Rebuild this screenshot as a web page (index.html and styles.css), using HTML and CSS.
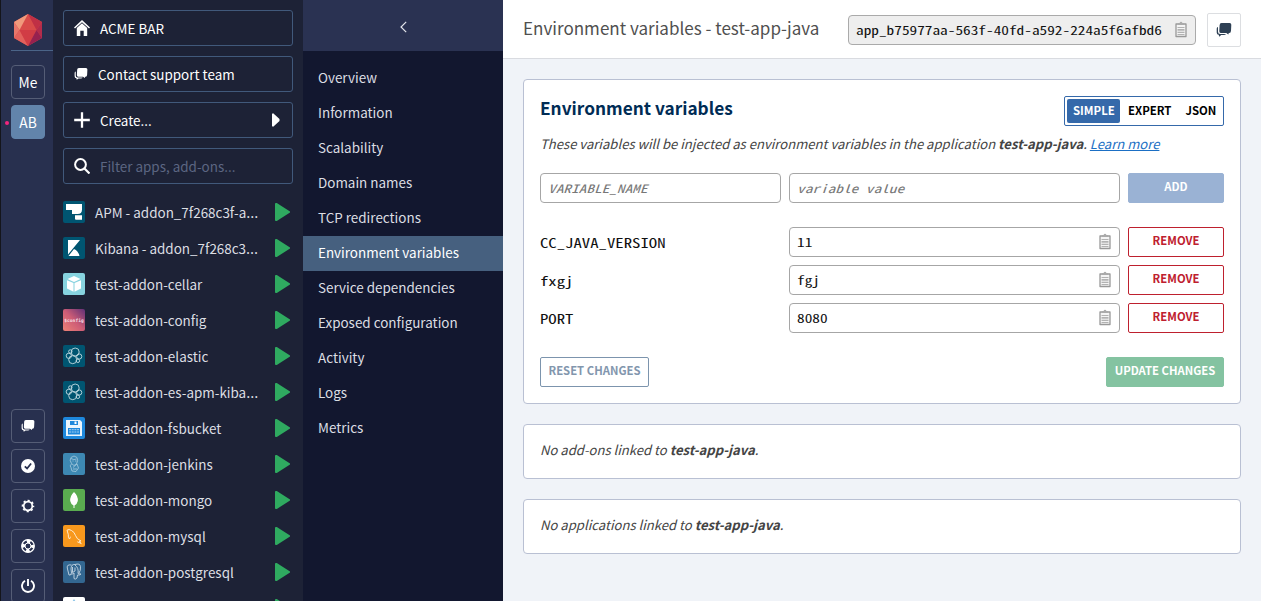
FILE: index.html
```
<!DOCTYPE html>
<html lang="en">
<head>
<meta charset="utf-8">
<title>Environment variables - test-app-java</title>
<link rel="stylesheet" href="styles.css">
</head>
<body>
<svg class="defs" width="0" height="0">
  <symbol id="chat" viewBox="0 0 16 16"><path d="M5.500 1h8.200q1.600 0 1.600 1.800l-.3 6q-.1 2.200-1.700 2.200h-.5l-.5 1.600-2-1.600H4.700Q3.200 11 3.300 9.200l.3-6Q3.700 1 5.500 1z"/><path d="M2 5q-1.300.3-1.300 1.800v3.700q0 2.200 2 2.300l.5 1.900 2-1.700h2.600q1.700 0 2.200-1H4.200Q2 12 2 9.800z"/></symbol>
  <symbol id="clip" viewBox="0 0 12 17"><path d="M1 3h10v12.500H1z" fill="#f4f4f4" stroke="#999" stroke-width="1.300" stroke-linejoin="round"/><path d="M3 2h1.500Q6-.6 7.500 2H9v2H3z" fill="#aaa"/><path d="M2.500 6.500h7M2.500 8.500h7M2.500 9.800h7M2.500 11.500h7M2.500 13.500h7" stroke="#aaa" stroke-width=".9"/></symbol>
  <symbol id="play" viewBox="0 0 15 18"><path d="M.8 0h1L15 8.500v1L1.800 18h-1Q0 18 0 17V1Q0 0 .8 0z" fill="#2faa60"/></symbol>
  <symbol id="elastic" viewBox="0 0 22 22"><path fill="#005571" d="M0 0h22v22H0z"/><g fill="none" stroke="#c4dbe2" stroke-width=".9"><circle cx="12.200" cy="7" r="4"/><circle cx="9.700" cy="14.700" r="4"/><circle cx="5.800" cy="10.800" r="2.600"/><circle cx="16.200" cy="11.500" r="2.600"/><circle cx="7.300" cy="6.500" r="1.700"/><circle cx="14.900" cy="15.800" r="1.700"/></g></symbol>
</svg>
<div class="app">
  <aside class="rail">
    <div class="brand"><svg width="28" height="32" viewBox="0 0 28 32"><path fill="#d94b49" d="M14 0 28 8v16l-14 8L0 24V8z"/><path fill="#f09a7c" d="M14 0 0 8l5.500 8z"/><path fill="#e8766a" d="M0 8v16l5.500-8z"/><path fill="#e2615c" d="m0 24 14 8-8.500-16z"/><path fill="#d13c45" d="M5.500 16h17L14 32z"/><path fill="#c03045" d="m14 0 14 8-5.500 8z"/><path fill="#b32c4b" d="M28 8v16l-5.500-8z"/><path fill="#96214f" d="m28 24-14 8 8.500-16z"/></svg></div>
    <div class="orgs"><a class="tile">Me</a><a class="tile on">AB</a></div>
    <div class="tools">
      <a class="tile"><svg width="14" height="14"><use href="#chat"/></svg></a>
      <a class="tile"><svg width="14" height="14" viewBox="0 0 14 14"><circle cx="7" cy="7" r="7"/><path d="m3.800 7.300 2.300 2.200 4-5" fill="none" stroke="#28304f" stroke-width="1.800"/></svg></a>
      <a class="tile"><svg width="14" height="14" viewBox="0 0 14 14"><g fill="none" stroke="#fff"><circle cx="7" cy="7" r="4.300" stroke-width="1.700"/><circle cx="7" cy="7" r="5.500" stroke-width="1.600" stroke-dasharray="2.160 2.160" stroke-dashoffset="1.080"/></g></svg></a>
      <a class="tile"><svg width="14" height="14" viewBox="0 0 14 14"><g fill="none" stroke="#fff"><circle cx="7" cy="7" r="6.300" stroke-width="1.200"/><circle cx="7" cy="7" r="3" stroke-width="1"/><circle cx="7" cy="7" r="4.700" stroke-width="3.400" stroke-dasharray="3.690 3.690" stroke-dashoffset="1.845"/></g></svg></a>
      <a class="tile"><svg width="14" height="14" viewBox="0 0 14 14"><path d="M4 1.800a6 6 0 1 0 6 0M7 0v7" fill="none" stroke="#fff" stroke-width="1.900"/></svg></a>
    </div>
  </aside>

  <aside class="side">
    <div class="box"><svg class="bi" width="16" height="16" viewBox="0 0 16 16"><path d="M8 0 16 7.500l-1 1-7-6.300-7 6.300-1-1z"/><path d="m8 3.200 5.200 4.700V16H9.700v-5.200H6.300V16H2.800V7.900z"/></svg>ACME BAR</div>
    <div class="box wide"><svg class="bi" width="14" height="14"><use href="#chat"/></svg>Contact support team</div>
    <div class="box"><svg class="bi" width="16" height="16" viewBox="0 0 16 16"><path d="M8 .2v15.600M.2 8h15.600" stroke="#fff" stroke-width="2.300"/></svg>Create...<svg class="caret" width="8" height="14" viewBox="0 0 8 14"><path d="M0 1q1-1.500 2 0l5.500 5v2L2 13q-1 1.500-2 0z"/></svg></div>
    <div class="box dim"><svg class="bi" width="16" height="16" viewBox="0 0 16 16" fill="none" stroke="#fff"><circle cx="6.500" cy="6.500" r="5.400" stroke-width="2"/><path d="m10.500 10.500 5 5" stroke-width="2.200"/></svg>Filter apps, add-ons...</div>
    <div class="list">
      <div class="row"><svg class="logo" viewBox="0 0 22 22"><path fill="#005571" d="M0 0h22v22H0z"/><path fill="#fff" d="M3 3h16v5.500q0 4.500-4.500 4.500H9V9H3zM12 14.300h7v4.500h-6q-1 0-1-1z"/></svg><span>APM - addon_7f268c3f-a<i class="dots">…</i></span><svg class="play"><use href="#play"/></svg></div>
      <div class="row"><svg class="logo" viewBox="0 0 22 22"><path fill="#005571" d="M0 0h22v22H0z"/><path fill="#fff" d="M5 3h12L5 17.500zM11 12q4 1.500 5.500 7H5.500z"/></svg><span>Kibana - addon_7f268c3<i class="dots">…</i></span><svg class="play"><use href="#play"/></svg></div>
      <div class="row"><svg class="logo" viewBox="0 0 22 22"><path fill="#87d3df" d="M0 0h22v22H0z"/><path fill="#fff" d="m11 3 6.500 3L11 9 4.500 6zM4 7.200l6.500 2.900v8.700L4 15.500zM18 7.200v8.300l-6.500 3.300v-8.700z"/></svg><span>test-addon-cellar</span><svg class="play"><use href="#play"/></svg></div>
      <div class="row"><svg class="logo" viewBox="0 0 22 22"><defs><linearGradient id="g" x1="0" y1="1" x2="1" y2="0"><stop stop-color="#ee8276"/><stop offset=".5" stop-color="#cc5c76"/><stop offset="1" stop-color="#603077"/></linearGradient></defs><path fill="url(#g)" d="M0 0h22v22H0z"/><text class="cfg" x="11" y="12.500" text-anchor="middle">$config</text></svg><span>test-addon-config</span><svg class="play"><use href="#play"/></svg></div>
      <div class="row"><svg class="logo"><use href="#elastic"/></svg><span>test-addon-elastic</span><svg class="play"><use href="#play"/></svg></div>
      <div class="row"><svg class="logo"><use href="#elastic"/></svg><span>test-addon-es-apm-kiba<i class="dots">…</i></span><svg class="play"><use href="#play"/></svg></div>
      <div class="row"><svg class="logo" viewBox="0 0 22 22"><path fill="#1e88dc" d="M0 0h22v22H0z"/><path fill="#eaf5fd" fill-rule="evenodd" d="M3 3h14l2 2v14H3zM7 4v4h8V4zM5 11v6.500h12V11z"/><path fill="#fff" d="M11.500 4.500h2V7h-2z"/><path d="M6 12.700h10M6 15h10" stroke="#a9d2f2" stroke-dasharray="2 .7"/></svg><span>test-addon-fsbucket</span><svg class="play"><use href="#play"/></svg></div>
      <div class="row"><svg class="logo" viewBox="0 0 22 22"><path fill="#3d88b3" d="M0 0h22v22H0z"/><path fill="none" stroke="#a6cade" stroke-width=".8" d="M8.500 10.500Q6 7 8 4.500q3-3 6 0 1.500 3-.5 6.500l-2.500 1.500zM8 5.500q3 2 5.500.5M9.500 8h1M12 8h1.500M8.500 11q-2.500 2-.5 3.500l1 3.500 4 .5 2.500-3.500-1.500-4-4 3.500M10 16h4"/></svg><span>test-addon-jenkins</span><svg class="play"><use href="#play"/></svg></div>
      <div class="row"><svg class="logo" viewBox="0 0 22 22"><path fill="#5aac50" d="M0 0h22v22H0z"/><path fill="#fff" d="M11 3q4.300 4 3.800 9-.6 3-3.300 4.500V19h-1v-2.500Q7.800 15 7.200 12 6.800 7 11 3z"/></svg><span>test-addon-mongo</span><svg class="play"><use href="#play"/></svg></div>
      <div class="row"><svg class="logo" viewBox="0 0 22 22"><path fill="#f8981d" d="M0 0h22v22H0z"/><path fill="none" stroke="#fff3df" stroke-width=".9" d="M6.500 14Q5 13 5.300 9.500L4 5.200Q6 3.700 8.500 5.500q3 1.500 4 5 1 3.500 5.500 5.500l-2 .3 2.300 2.200-4-1.700M6.500 14l1-2.300"/></svg><span>test-addon-mysql</span><svg class="play"><use href="#play"/></svg></div>
      <div class="row"><svg class="logo" viewBox="0 0 22 22"><path fill="#336791" d="M0 0h22v22H0z"/><path fill="none" stroke="#c7d7e3" stroke-width=".9" d="M8.500 4Q3 3 4.500 8l1.500 6q1.500 1 2.500-2L8 8q0-5 4-4.500 5-1.500 5.500 2 .5 4-2 7.500h2.500q-1.500 1.500-3.500 1L14 17q-2 2-3 .5V12l-2.500 1.500M12 4q4 3 3 8.500M9.500 6v5.500L12 10V6.500"/></svg><span>test-addon-postgresql</span><svg class="play"><use href="#play"/></svg></div>
      <div class="row"><svg class="logo" viewBox="0 0 22 22"><path fill="#fff" d="M0 0h22v22H0z"/><path fill="#8ec6e8" d="m11 2 4 6H7z"/></svg><span></span><svg class="play"><use href="#play"/></svg></div>
    </div>
  </aside>

  <nav class="nav">
    <div class="collapse"><svg width="7" height="12" viewBox="0 0 7 12"><path d="M6.200.8 1 6l5.200 5.200" fill="none" stroke="#e4e6ec" stroke-width="1.200"/></svg></div>
    <div class="links"><a>Overview</a><a>Information</a><a>Scalability</a><a>Domain names</a><a>TCP redirections</a><a class="on">Environment variables</a><a>Service dependencies</a><a>Exposed configuration</a><a>Activity</a><a>Logs</a><a>Metrics</a></div>
  </nav>

  <main class="main">
    <header class="head">
      <h1>Environment variables - test-app-java</h1>
      <div class="field appid"><span>app_b75977aa-563f-40fd-a592-224a5f6afbd6</span><svg class="clip"><use href="#clip"/></svg></div>
      <div class="chatbtn"><svg width="16" height="16"><use href="#chat"/></svg></div>
    </header>
    <div class="content">
      <section class="card vars">
        <div class="top"><h2>Environment variables</h2><div class="toggle"><b class="on">SIMPLE</b><b>EXPERT</b><b>JSON</b></div></div>
        <p class="desc">These variables will be injected as environment variables in the application <strong>test-app-java</strong>. <a>Learn more</a></p>
        <div class="grid add"><div class="field ph"><span>VARIABLE_NAME</span></div><div class="field ph"><span>variable value</span></div><div class="btn blue">ADD</div></div>
        <div class="grid"><span class="key">CC_JAVA_VERSION</span><div class="field"><span>11</span><svg class="clip"><use href="#clip"/></svg></div><div class="btn red">REMOVE</div></div>
        <div class="grid"><span class="key">fxgj</span><div class="field"><span>fgj</span><svg class="clip"><use href="#clip"/></svg></div><div class="btn red">REMOVE</div></div>
        <div class="grid"><span class="key">PORT</span><div class="field"><span>8080</span><svg class="clip"><use href="#clip"/></svg></div><div class="btn red">REMOVE</div></div>
        <div class="actions"><div class="btn reset">RESET CHANGES</div><div class="btn green">UPDATE CHANGES</div></div>
      </section>
      <section class="card note">No add-ons linked to <strong>test-app-java</strong>.</section>
      <section class="card note">No applications linked to <strong>test-app-java</strong>.</section>
    </div>
  </main>
</div>
</body>
</html>
```
FILE: styles.css
```
* { box-sizing: border-box; }
body { margin: 0; height: 601px; overflow: hidden; font-family: "Noto Sans CJK SC", "Open Sans", sans-serif; font-size: 13.45px; line-height: 20px; }
svg { display: block; flex: none; }
.defs { position: absolute; }
.app { display: flex; height: 601px; overflow: hidden; }

.rail { width: 53px; flex: none; background: #28304f; border-left: 1px solid #14151b; padding-left: 10px; display: flex; flex-direction: column; fill: #fff; color: #fff; }
.brand { height: 51px; flex: none; padding: 14px 0 0 3px; border-bottom: 1px solid #4b6488; }
.orgs { display: flex; flex-direction: column; gap: 6px; padding-top: 14px; }
.tools { display: flex; flex-direction: column; gap: 6px; margin-top: 270px; }
.tile { position: relative; width: 34px; height: 34px; flex: none; border: 1px solid #555d76; border-radius: 4px; display: flex; align-items: center; justify-content: center; font-size: 13.8px; }
.tile.on { background: #6284ab; border-color: #6284ab; }
.tile.on::before { content: ""; position: absolute; left: -7px; top: 15px; width: 4px; height: 4px; border-radius: 2px; background: #f4267e; }

.side { width: 250px; flex: none; background: #1d2236; padding: 10px; display: flex; flex-direction: column; gap: 10px; fill: #fff; color: #fff; }
.box { height: 36px; flex: none; border: 1px solid #41597b; border-radius: 3px; display: flex; align-items: center; padding: 0 12px 0 10px; }
.bi { margin-right: 10px; }
.dim { color: #5c6682; }
.caret { margin-left: auto; }
.list { display: flex; flex-direction: column; }
.row { height: 36px; flex: none; display: flex; align-items: center; color: #dcdee3; }
.row span { width: 168px; margin: 0 12px 0 10px; white-space: nowrap; }
.dots { font: 15.500px/16px "Open Sans", sans-serif; }
.logo { width: 22px; height: 22px; border-radius: 2px; }
.play { width: 15px; height: 18px; }
.cfg { font: bold 4.600px "DejaVu Sans Mono", monospace; fill: #f6dfe4; }

.nav { width: 200px; flex: none; background: #12172f; color: #dcdee3; }
.collapse { height: 51px; background: #2a3252; display: flex; align-items: center; justify-content: center; padding-top: 2px; }
.links { display: flex; flex-direction: column; padding-top: 10px; }
.links a { height: 35px; padding: 6px 15px; }
.links .on { background: #46607f; color: #fff; }

.main { flex: 1; background: #f0f3f8; }
.head { height: 59px; background: #fff; border-bottom: 1px solid #d9dbe0; padding: 2px 20px 0; display: flex; align-items: center; }
h1 { margin: 0 0 5px; font-size: 17.05px; line-height: 26px; font-weight: 400; color: #505050; width: 325px; white-space: nowrap; }
.field { height: 30px; border: 1px solid #a6a6a6; border-radius: 4px; background: #fff; padding: 0 7px 1px; display: flex; align-items: center; justify-content: space-between; font-family: "Noto Sans Mono CJK SC", "DejaVu Sans Mono", monospace; font-size: 11.5px; color: #111; white-space: nowrap; }
.field span { transform: scaleX(1.33); transform-origin: left; }
.clip { width: 14px; height: 17px; }
.appid { width: 348px; background: #eee; border-color: #aaa; }
.chatbtn { width: 34px; height: 34px; margin-left: 11px; border: 1px solid #dcdee1; border-radius: 2px; display: flex; align-items: center; justify-content: center; fill: #2e4054; }

.content { padding: 20px; display: flex; flex-direction: column; gap: 20px; }
.card { background: #fff; border: 1px solid #b9c0d3; border-radius: 4px; padding: 0 16px; }
.vars { height: 325px; padding-top: 16px; display: flex; flex-direction: column; }
.top { display: flex; justify-content: space-between; height: 30px; }
h2 { margin: 0; font-size: 17.25px; line-height: 24px; color: #002c55; }
.toggle { width: 160px; height: 30px; border: 1px solid #3569aa; border-radius: 2px; padding: 2px; display: flex; font-size: 11.4px; line-height: 23px; color: #000; }
.toggle b { padding: 0 6px; margin-right: 2px; }
.toggle .on { background: #3569aa; color: #fff; border-radius: 2px; width: 53px; }
.desc, .note { font-style: italic; color: #444; font-size: 13.1px; }
.desc { margin: 8px 0 19px; white-space: nowrap; }
.desc a { color: #1b6fc4; text-decoration: underline; }
.grid { display: grid; grid-template-columns: 241px 331px 96px; gap: 8px; margin-bottom: 8px; }
.add { margin-bottom: 24px; }
.ph { color: #777; font-style: italic; }
.key { font-family: "Noto Sans Mono CJK SC", "DejaVu Sans Mono", monospace; font-size: 12.6px; height: 30px; line-height: 32px; color: #111; justify-self: start; transform: scaleX(1.33); transform-origin: left; }
.btn { height: 30px; border: 1px solid; border-radius: 2px; text-align: center; font-weight: 700; font-size: 11.3px; line-height: 25px; white-space: nowrap; }
.blue { background: #9ab2d4; border-color: #9ab2d4; color: #fff; }
.red { border-color: #be202e; color: #be202e; }
.actions { display: flex; justify-content: space-between; margin-top: 16px; }
.reset { width: 109px; border-color: #7c94ad; color: #8296ad; }
.green { width: 118px; background: #84c3a1; border-color: #84c3a1; color: #fff; }
.note { height: 55px; padding-top: 15px; }
```
